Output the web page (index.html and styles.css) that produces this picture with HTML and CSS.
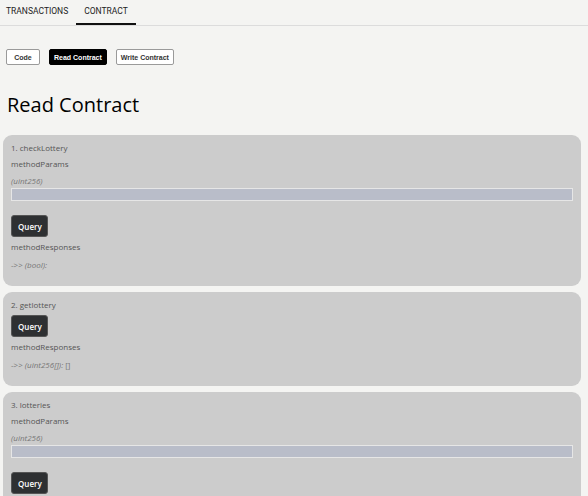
FILE: index.html
```html
<!DOCTYPE html>
<html lang="en">
<head>
<meta charset="UTF-8" />
<title>Contract</title>
<link rel="stylesheet" href="styles.css">
</head>
<body>

<div class="tabs">
  <div class="tab first">TRANSACTIONS</div>
  <div class="tab active">CONTRACT</div>
</div>

<div class="switcher">
  <button class="switch">Code</button>
  <button class="switch selected">Read Contract</button>
  <button class="switch">Write Contract</button>
</div>

<h1>Read Contract</h1>

<div class="methods">
  <div class="method">
    <div class="line">1. checkLottery</div>
    <div class="line gap">methodParams</div>
    <div class="line param">(uint256)</div>
    <input class="field" type="text" />
    <button class="query spaced">Query</button>
    <div class="line gap">methodResponses</div>
    <div class="line result">-&gt;&gt; <i>(bool):</i></div>
  </div>

  <div class="method">
    <div class="line">2. getlottery</div>
    <button class="query">Query</button>
    <div class="line gap">methodResponses</div>
    <div class="line result">-&gt;&gt; <i>(uint256[]):</i> []</div>
  </div>

  <div class="method">
    <div class="line">3. lotteries</div>
    <div class="line gap">methodParams</div>
    <div class="line param">(uint256)</div>
    <input class="field" type="text" />
    <button class="query spaced">Query</button>
  </div>
</div>

</body>
</html>
```

FILE: styles.css
```css
body {
  margin: 0;
  background: #f4f4f2;
  font-family: "Open Sans", sans-serif;
  color: #222;
  overflow: hidden;
}
.tabs {
  display: flex;
  height: 25px;
  border-bottom: 1px solid #dcdcdc;
  font-family: Roboto, "Liberation Sans", sans-serif;
  font-size: 8.5px;
}
.tab {
  padding: 0 8px;
  line-height: 23px;
  color: #222;
}
.tab.first {
  padding-left: 6px;
}
.tab.active {
  border-bottom: 2px solid #111;
}
.switcher {
  display: flex;
  gap: 9px;
  padding: 23px 0 0 6px;
}
.switch {
  min-width: 34px;
  height: 16px;
  padding: 0 4px;
  border: 1px solid #9a9a9a;
  border-radius: 2px;
  background: #fff;
  color: #333;
  font-family: "Liberation Sans", Arial, sans-serif;
  font-size: 7px;
  font-weight: bold;
}
.switch.selected {
  background: #000;
  border-color: #000;
  color: #fff;
}
h1 {
  margin: 27px 0 0 7px;
  font-size: 20px;
  font-weight: normal;
  line-height: 26px;
  color: #000;
}
.methods {
  display: flex;
  flex-direction: column;
  gap: 6px;
  width: 578px;
  margin: 17px 0 0 3px;
}
.method {
  display: flex;
  flex-direction: column;
  align-items: flex-start;
  background: #cccccc;
  border-radius: 9px;
  padding: 7px 8px 15px;
}
.line {
  font-size: 8px;
  line-height: 12px;
  color: #555;
}
.line.gap {
  margin-top: 4px;
}
.param {
  margin-top: 5px;
  font-style: italic;
  color: #777;
}
.result {
  margin-top: 6px;
  color: #777;
}
.field {
  box-sizing: border-box;
  width: 100%;
  height: 13px;
  margin: 1px 0 0;
  padding: 0;
  border: 1px solid #e6e6e6;
  background: #b9bdc9;
}
.query {
  box-sizing: border-box;
  width: 37px;
  height: 22px;
  margin-top: 4px;
  border: 1px solid #555;
  border-radius: 3px;
  background: #2e3032;
  color: #fff;
  font-family: "Open Sans", sans-serif;
  font-size: 8px;
  font-weight: 600;
  cursor: pointer;
}
.query.spaced {
  margin-top: 14px;
}
```
